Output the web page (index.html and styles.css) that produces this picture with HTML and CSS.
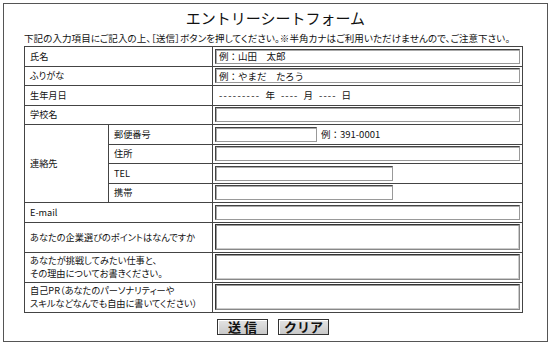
FILE: index.html
```html
<!DOCTYPE html>
<html lang="ja">
<head>
<meta charset="utf-8">
<title>エントリーシートフォーム</title>
<link rel="stylesheet" href="styles.css">
</head>
<body>
<div class="sheet">
  <h1 class="title">エントリーシートフォーム</h1>
  <p class="lead">下記の入力項目にご記入の上、［送信］ボタンを押してください。※半角カナはご利用いただけませんので、ご注意下さい。</p>
  <form class="form">
    <table class="grid">
      <colgroup><col class="c1"><col class="c2"><col class="c3"></colgroup>
      <tr class="row"><th colspan="2">氏名</th><td><input class="field wide" type="text" value="例：山田　太郎"></td></tr>
      <tr class="row"><th colspan="2">ふりがな</th><td><input class="field wide" type="text" value="例：やまだ　たろう"></td></tr>
      <tr class="row"><th colspan="2">生年月日</th><td><span class="date"><span class="dash long">---------</span><span class="unit">年</span><span class="dash">----</span><span class="unit">月</span><span class="dash">----</span><span class="unit">日</span></span></td></tr>
      <tr class="row"><th colspan="2">学校名</th><td><input class="field wide" type="text"></td></tr>
      <tr class="row"><th rowspan="4" class="group">連絡先</th><th>郵便番号</th><td><input class="field zip" type="text"><span class="hint">例：391-0001</span></td></tr>
      <tr class="row"><th>住所</th><td><input class="field wide" type="text"></td></tr>
      <tr class="row"><th>TEL</th><td><input class="field mid" type="text"></td></tr>
      <tr class="row"><th>携帯</th><td><input class="field mid" type="text"></td></tr>
      <tr class="row"><th colspan="2">E-mail</th><td><input class="field wide" type="text"></td></tr>
      <tr class="row tall"><th colspan="2">あなたの企業選びのポイントはなんですか</th><td><textarea class="area"></textarea></td></tr>
      <tr class="row tall"><th colspan="2" class="multi">あなたが挑戦してみたい仕事と、<br>その理由についてお書きください。</th><td><textarea class="area"></textarea></td></tr>
      <tr class="row tall"><th colspan="2" class="multi">自己PR（あなたのパーソナリティーや<br>スキルなどなんでも自由に書いてください）</th><td><textarea class="area"></textarea></td></tr>
    </table>
    <div class="actions">
      <button class="btn" type="submit">送 信</button>
      <button class="btn" type="reset">クリア</button>
    </div>
  </form>
</div>
</body>
</html>
```
FILE: styles.css
```css
* { box-sizing: border-box; }
html, body { margin: 0; padding: 0; background: #fff; }
body {
  font-family: "Noto Sans CJK JP", "Noto Sans", sans-serif;
  color: #111;
  font-size: 10px;
}
.sheet {
  margin: 3px;
  width: 545px;
  height: 339px;
  border: 1px solid #555;
  padding: 4px 0 0 20px;
}
.title {
  margin: 0;
  padding-right: 20px;
  font-size: 15px;
  font-weight: normal;
  line-height: 20px;
  text-align: center;
}
.lead {
  margin: 4px 0 2px;
  font-size: 9.5px;
  line-height: 12px;
  letter-spacing: 0.09px;
  white-space: nowrap;
  font-feature-settings: "palt";
}
.form { margin: 0; }
.grid {
  width: 498px;
  border-collapse: collapse;
  table-layout: fixed;
  border: 1px solid #333;
}
.c1 { width: 84px; }
.c2 { width: 104px; }
.c3 { width: 310px; }
.grid th, .grid td {
  border: 1px solid #444;
  padding: 0 2px;
  font-weight: normal;
  text-align: left;
  vertical-align: middle;
  font-size: 9.5px;
  line-height: 11px;
  white-space: nowrap;
}
.grid th {
  padding-left: 5px;
  font-size: 9.2px;
  font-feature-settings: "palt";
}
.grid th.multi { line-height: 13.5px; }
.row { height: 19.5px; }
.row.tall { height: 30px; }
.field {
  display: block;
  height: 15px;
  margin: 0;
  padding: 0 3px;
  font: inherit;
  font-size: 9.5px;
  color: #111;
  border: 1px solid #555;
  border-color: #444 #999 #999 #444;
  box-shadow: inset 1px 1px 0 #aaa;
  background: #fff;
}
.wide { width: 305px; }
.mid { width: 178px; }
.zip { display: inline-block; width: 102px; vertical-align: middle; }
.hint { margin-left: 4px; vertical-align: middle; }
.date { padding-left: 4px; display: inline-flex; align-items: center; }
.dash { letter-spacing: 1.1px; }
.dash.long { letter-spacing: 1.3px; }
.unit { margin: 0 6px 0 5px; }
.area {
  display: block;
  width: 305px;
  height: 26px;
  margin: 0;
  padding: 1px 3px;
  resize: none;
  font: inherit;
  border: 1px solid #555;
  border-color: #333 #888 #888 #333;
  box-shadow: inset 1px 1px 0 #999, inset -1px -1px 0 #ccc;
  background: #fff;
  overflow: hidden;
}
.actions {
  display: flex;
  justify-content: center;
  gap: 10px;
  margin: 6px 0 0;
  width: 498px;
}
.btn {
  width: 51px;
  height: 16px;
  padding: 0;
  margin: 0;
  font-family: "Noto Sans CJK JP", sans-serif;
  font-size: 13px;
  font-weight: bold;
  line-height: 14px;
  color: #111;
  background: linear-gradient(#e4e4e4, #c8c8c8);
  border: 1px solid #333;
  box-shadow: inset 1px 1px 0 #fff;
}
```
